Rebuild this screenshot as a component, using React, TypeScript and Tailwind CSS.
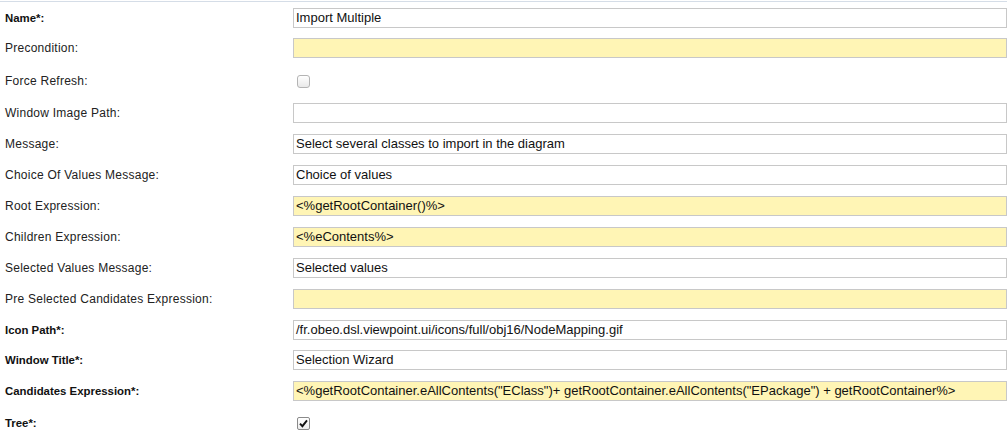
import React from "react";

type Row = {
  label: string;
  bold?: boolean;
  kind: "text" | "yellow" | "check" | "checked";
  value?: string;
  h: string;
};

const rows: Row[] = [
  { label: "Name*:", bold: true, kind: "text", value: "Import Multiple", h: "h-[30px] pt-[6px]" },
  { label: "Precondition:", kind: "yellow", h: "h-[31px] pt-[6px]" },
  { label: "Force Refresh:", kind: "check", h: "h-[34px] pt-[12px]" },
  { label: "Window Image Path:", kind: "text", h: "h-[31px] pt-[6px]" },
  { label: "Message:", kind: "text", value: "Select several classes to import in the diagram", h: "h-[31px] pt-[6px]" },
  { label: "Choice Of Values Message:", kind: "text", value: "Choice of values", h: "h-[31px] pt-[6px]" },
  { label: "Root Expression:", kind: "yellow", value: "<%getRootContainer()%>", h: "h-[31px] pt-[6px]" },
  { label: "Children Expression:", kind: "yellow", value: "<%eContents%>", h: "h-[31px] pt-[6px]" },
  { label: "Selected Values Message:", kind: "text", value: "Selected values", h: "h-[31px] pt-[6px]" },
  { label: "Pre Selected Candidates Expression:", kind: "yellow", h: "h-[31px] pt-[6px]" },
  { label: "Icon Path*:", bold: true, kind: "text", value: "/fr.obeo.dsl.viewpoint.ui/icons/full/obj16/NodeMapping.gif", h: "h-[30px] pt-[6px]" },
  { label: "Window Title*:", bold: true, kind: "text", value: "Selection Wizard", h: "h-[31px] pt-[6px]" },
  {
    label: "Candidates Expression*:",
    bold: true,
    kind: "yellow",
    value: '<%getRootContainer.eAllContents("EClass")+ getRootContainer.eAllContents("EPackage") + getRootContainer%>',
    h: "h-[32px] pt-[6px]",
  },
  { label: "Tree*:", bold: true, kind: "checked", h: "h-[31px] pt-[10px]" },
];

function Field({ row }: { row: Row }) {
  if (row.kind === "check") {
    return (
      <span className="ml-[4px] block h-[13px] w-[13px] rounded-[3px] border border-[#b4b4b4] bg-[linear-gradient(180deg,#ffffff_0%,#e9e9e9_100%)]" />
    );
  }
  if (row.kind === "checked") {
    return (
      <span className="ml-[4px] flex h-[13px] w-[13px] items-center justify-center rounded-[2px] border border-[#8a8a8a] bg-[linear-gradient(180deg,#ffffff_0%,#ececec_100%)]">
        <svg width="9" height="9" viewBox="0 0 9 9">
          <path d="M1 4.6 L3.4 7.2 L8 1.4" fill="none" stroke="#111" strokeWidth="1.9" />
        </svg>
      </span>
    );
  }
  const bg = row.kind === "yellow" ? "bg-[#fff5b5]" : "bg-white";
  return (
    <div
      className={`h-[20px] w-[740px] border border-[#c8c8c8] ${bg} pl-[2px] text-[13px] leading-[18px] whitespace-nowrap text-[#111]`}
    >
      {row.value}
    </div>
  );
}

export default function App() {
  return (
    <div className="h-[438px] w-[1007px] overflow-hidden bg-white pt-px font-['Liberation_Sans',Arial,sans-serif]">
      <div className="h-px bg-[#d5dde7]" />
      {rows.map((row) => {
        const isCheck = row.kind === "check" || row.kind === "checked";
        return (
          <div key={row.label} className={`flex items-start ${row.h}`}>
            <div
              className={`w-[293px] shrink-0 pl-[5px] whitespace-nowrap ${
                isCheck ? "h-[13px] leading-[13px]" : "h-[20px] leading-[20px]"
              } ${
                row.bold
                  ? "text-[11.4px] font-bold text-[#111]"
                  : "text-[12px] tracking-[0.25px] text-[#222]"
              }`}
            >
              {row.label}
            </div>
            <Field row={row} />
          </div>
        );
      })}
    </div>
  );
}
